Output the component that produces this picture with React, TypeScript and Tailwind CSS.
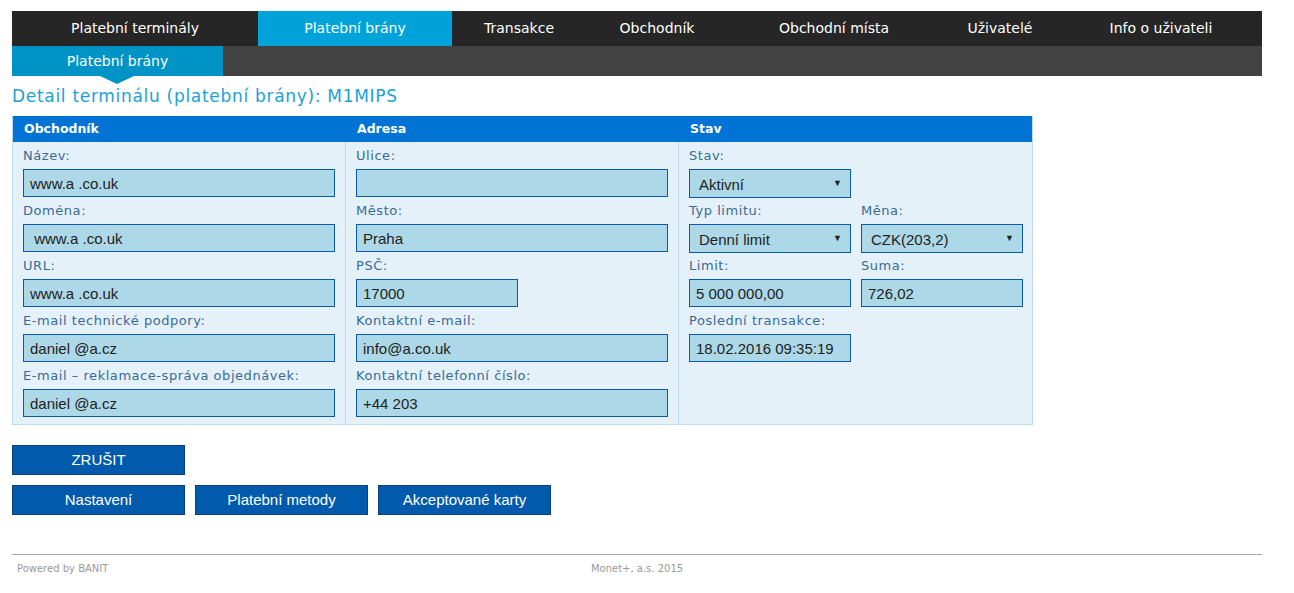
import React from "react";

const nav = [
  { t: "Platební terminály", w: "w-[246px]" },
  { t: "Platební brány", w: "w-[194px]", active: true },
  { t: "Transakce", w: "w-[134px]" },
  { t: "Obchodník", w: "w-[142px]" },
  { t: "Obchodní místa", w: "w-[212px]" },
  { t: "Uživatelé", w: "w-[120px]" },
  { t: "Info o uživateli", w: "w-[202px]" },
];

function Label({ children }: { children: React.ReactNode }) {
  return (
    <div className="h-[27px] pt-[5px] text-[13px] leading-[18px] tracking-[0.55px] text-[#3b6a98] font-['DejaVu_Sans',sans-serif] whitespace-nowrap">
      {children}
    </div>
  );
}

function Input({ value, w = "w-[312px]" }: { value: string; w?: string }) {
  return (
    <div
      className={`${w} h-[28px] border border-[#0a5aa8] bg-[#add8e8] px-[6px] pt-[2px] flex items-center text-[15px] text-[#222] font-['Liberation_Sans',Arial,sans-serif] whitespace-pre`}
    >
      {value}
    </div>
  );
}

function Select({ value }: { value: string }) {
  return (
    <div className="w-[162px] h-[29px] border border-[#0a5aa8] bg-[#add8e8] pl-[9px] pr-[8px] flex items-center justify-between text-[15px] text-[#222] font-['Liberation_Sans',Arial,sans-serif]">
      <span className="pt-[3px]">{value}</span>
      <span className="text-[9px]">▼</span>
    </div>
  );
}

function Field({ label, value, w }: { label: string; value: string; w?: string }) {
  return (
    <div>
      <Label>{label}</Label>
      <Input value={value} w={w} />
    </div>
  );
}

function Btn({ children }: { children: React.ReactNode }) {
  return (
    <button className="w-[173px] h-[30px] bg-[#015aab] border border-[#0b3f78] text-white text-[15px] font-['Liberation_Sans',Arial,sans-serif] flex items-center justify-center">
      {children}
    </button>
  );
}

export default function App() {
  return (
    <div className="bg-white w-[1294px] min-h-[593px] pt-[11px] px-[12px] font-['DejaVu_Sans',sans-serif]">
      <div className="w-[1250px]">
        {/* top nav */}
        <div className="flex h-[35px] bg-[#262626]">
          {nav.map((n) => (
            <div
              key={n.t}
              className={`${n.w} flex items-center justify-center text-[14px] text-white ${n.active ? "bg-[#00a3d9]" : ""}`}
            >
              {n.t}
            </div>
          ))}
        </div>
        {/* sub nav */}
        <div className="flex h-[30px] bg-[#424242]">
          <div className="relative w-[211px] bg-[#0094c6] flex items-center justify-center text-[14px] text-white">
            Platební brány
            <div className="absolute left-[88px] top-[30px] w-0 h-0 border-l-[17px] border-r-[17px] border-t-[8px] border-l-transparent border-r-transparent border-t-[#0094c6]" />
          </div>
        </div>
        {/* title */}
        <div className="h-[40px] pt-[9px] text-[17px] leading-[22px] tracking-[0.7px] text-[#1ba1d9]">
          Detail terminálu (platební brány): M1MIPS
        </div>
        {/* table */}
        <div className="w-[1021px] border border-[#bcdcec] border-t-0">
          <div className="flex h-[26px] bg-[#0073d4] text-white text-[12.5px] font-bold items-center">
            <div className="w-[333px] pl-[11px]">Obchodník</div>
            <div className="w-[333px] pl-[11px]">Adresa</div>
            <div className="pl-[11px]">Stav</div>
          </div>
          <div className="flex bg-[#e4f1f8] h-[282px]">
            <div className="w-[333px] pl-[10px] border-r border-[#bcdcec]">
              <Field label="Název:" value="www.a .co.uk" />
              <Field label="Doména:" value=" www.a .co.uk" />
              <Field label="URL:" value="www.a .co.uk" />
              <Field label="E-mail technické podpory:" value="daniel @a.cz" />
              <Field label="E-mail – reklamace-správa objednávek:" value="daniel @a.cz" />
            </div>
            <div className="w-[333px] pl-[10px] border-r border-[#bcdcec]">
              <Field label="Ulice:" value="" />
              <Field label="Město:" value="Praha" />
              <Field label="PSČ:" value="17000" w="w-[162px]" />
              <Field label="Kontaktní e-mail:" value="info@a.co.uk" />
              <Field label="Kontaktní telefonní číslo:" value="+44 203" />
            </div>
            <div className="flex-1 pl-[10px]">
              <Label>Stav:</Label>
              <Select value="Aktivní" />
              <div className="flex gap-[10px] -mt-[1px]">
                <div>
                  <Label>Typ limitu:</Label>
                  <Select value="Denní limit" />
                </div>
                <div>
                  <Label>Měna:</Label>
                  <Select value="CZK(203,2)" />
                </div>
              </div>
              <div className="flex gap-[10px] -mt-[1px]">
                <div>
                  <Label>Limit:</Label>
                  <Input value="5 000 000,00" w="w-[162px]" />
                </div>
                <div>
                  <Label>Suma:</Label>
                  <Input value="726,02" w="w-[162px]" />
                </div>
              </div>
              <Label>Poslední transakce:</Label>
              <Input value="18.02.2016 09:35:19" w="w-[162px]" />
            </div>
          </div>
        </div>
        {/* buttons */}
        <div className="mt-[20px] flex flex-col gap-[10px]">
          <div className="flex">
            <Btn>ZRUŠIT</Btn>
          </div>
          <div className="flex gap-[10px]">
            <Btn>Nastavení</Btn>
            <Btn>Platební metody</Btn>
            <Btn>Akceptované karty</Btn>
          </div>
        </div>
        {/* footer */}
        <div className="mt-[39px] border-t border-[#aaaaaa] relative h-[30px] text-[10px] text-[#999]">
          <div className="absolute left-[5px] top-[6px]">Powered by BANIT</div>
          <div className="text-center pt-[6px]">Monet+, a.s. 2015</div>
        </div>
      </div>
    </div>
  );
}
